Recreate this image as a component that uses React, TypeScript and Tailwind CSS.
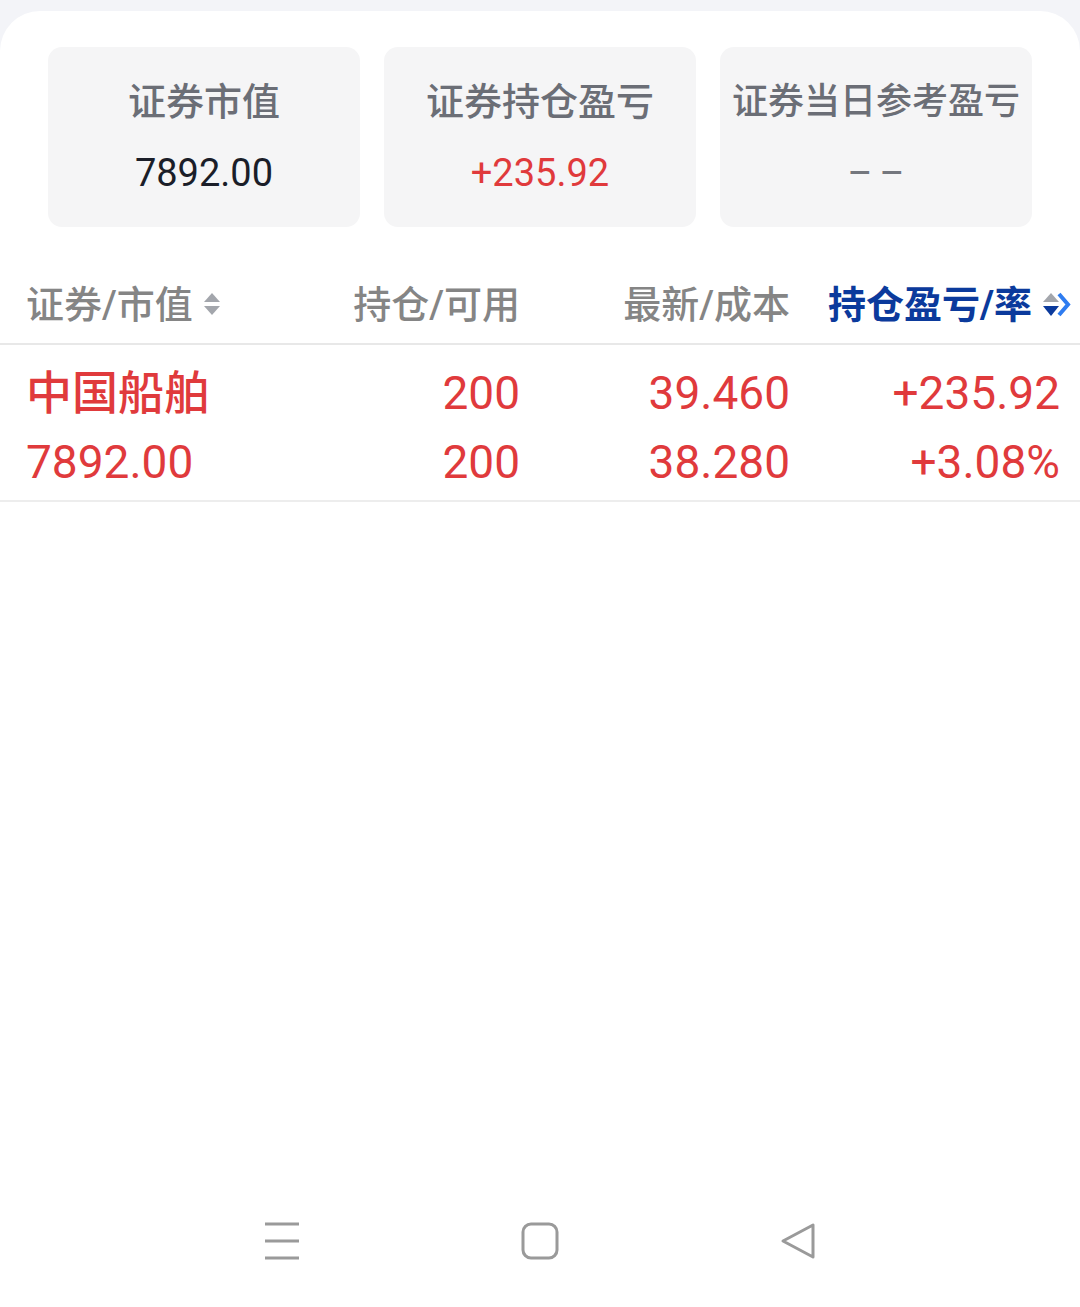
import React from "react";

const font = { fontFamily: 'Roboto, "Noto Sans CJK SC", sans-serif' };

const summary = [
  { label: "证券市值", value: "7892.00", tone: "text-[#1b1e29]", size: "text-[38px]" },
  { label: "证券持仓盈亏", value: "+235.92", tone: "text-[#e03a3c]", size: "text-[38px]" },
  { label: "证券当日参考盈亏", value: "––", tone: "text-[#74777e] tracking-[7px] pl-[7px]", size: "text-[36px]" },
];

function SortIcon() {
  return (
    <svg width="18" height="28" viewBox="0 0 18 28" aria-hidden="true">
      <polygon points="9,2 17,11 1,11" fill="#a3a6ac" />
      <polygon points="1,15 17,15 9,24" fill="#a3a6ac" />
    </svg>
  );
}

function ActiveSortIcon() {
  return (
    <svg width="30" height="30" viewBox="0 0 30 30" aria-hidden="true">
      <polygon points="9,3 17,12 1,12" fill="#a3a6ac" />
      <polygon points="1,16 17,16 9,26" fill="#0b3a9c" />
      <path d="M17 4 L26 14.5 L17 25" fill="none" stroke="#2e7cf0" strokeWidth="4" strokeLinejoin="miter" />
    </svg>
  );
}

export default function App() {
  return (
    <div className="w-[1080px] h-[1307px] bg-[#f3f4f8] pt-[11px] flex flex-col" style={font}>
      <div className="flex-1 bg-white rounded-t-[40px] flex flex-col">
        <div className="grid grid-cols-3 gap-[24px] px-[48px] pt-[36px]">
          {summary.map((s) => (
            <div key={s.label} className="h-[180px] rounded-[14px] bg-[#f5f5f6] flex flex-col items-center pt-[30px]">
              <div className={`${s.size} leading-[50px] font-medium text-[#6b6e76] whitespace-nowrap`}>{s.label}</div>
              <div className={`mt-[21px] text-[38px] leading-[50px] ${s.tone}`}>{s.value}</div>
            </div>
          ))}
        </div>

        <div className="mt-[40px] h-[78px] flex items-center pl-[26px] pr-[8px] border-b-2 border-[#e8e8e8] text-[38px] font-medium text-[#858585]">
          <div className="w-[234px] flex items-center gap-[10px]">
            <span>证券/市值</span>
            <SortIcon />
          </div>
          <div className="w-[260px] text-right">持仓/可用</div>
          <div className="w-[270px] text-right">最新/成本</div>
          <div className="w-[282px] flex items-center justify-end gap-[10px]">
            <span className="font-bold text-[#0b3a9c]">持仓盈亏/率</span>
            <ActiveSortIcon />
          </div>
        </div>

        <div className="flex pl-[26px] pr-[20px] pt-[14px] pb-[3px] border-b-2 border-[#ededed] text-[46px] leading-[69px] text-[#e03a3c]">
          <div className="w-[234px]">
            <div className="font-medium">中国船舶</div>
            <div>7892.00</div>
          </div>
          <div className="w-[260px] text-right">
            <div>200</div>
            <div>200</div>
          </div>
          <div className="w-[270px] text-right">
            <div>39.460</div>
            <div>38.280</div>
          </div>
          <div className="w-[270px] text-right">
            <div>+235.92</div>
            <div>+3.08%</div>
          </div>
        </div>

        <div className="mt-auto h-[132px] grid grid-cols-3 px-[153px] items-center">
          <div className="flex justify-center">
            <svg width="38" height="38" viewBox="0 0 38 38" aria-hidden="true">
              <path d="M2 2 H36 M2 19 H36 M2 36 H36" stroke="#9a9a9a" strokeWidth="3" />
            </svg>
          </div>
          <div className="flex justify-center">
            <svg width="38" height="38" viewBox="0 0 38 38" aria-hidden="true">
              <rect x="2" y="2" width="34" height="34" rx="8" fill="none" stroke="#9a9a9a" strokeWidth="3" />
            </svg>
          </div>
          <div className="flex justify-center">
            <svg width="38" height="38" viewBox="0 0 38 38" aria-hidden="true">
              <path d="M34 3 V35 L4 19 Z" fill="none" stroke="#9a9a9a" strokeWidth="3" strokeLinejoin="round" />
            </svg>
          </div>
        </div>
      </div>
    </div>
  );
}
